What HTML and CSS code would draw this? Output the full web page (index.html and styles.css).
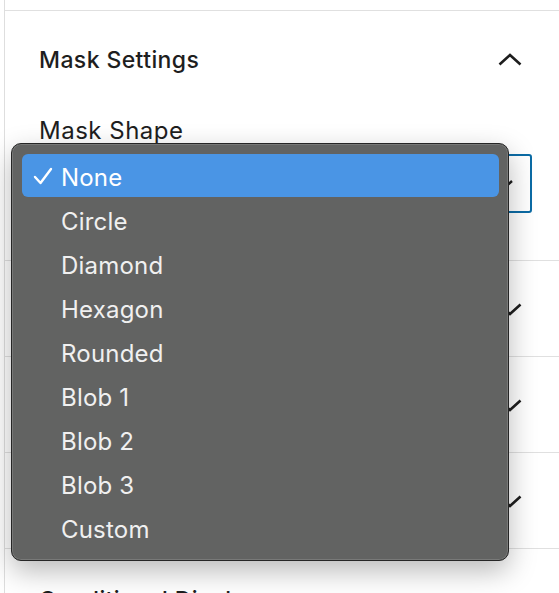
FILE: index.html
```html
<!DOCTYPE html>
<html>
<head>
<meta charset="utf-8">
<link rel="stylesheet" href="styles.css">
</head>
<body>
<div class="sidebar">
  <div class="prev"></div>
  <section class="panel open">
    <div class="panel-header">
      <span class="panel-title">Mask Settings</span>
      <svg class="chev" width="24" height="14" viewBox="0 0 24 14"><path d="M1.5 11.5 L12 2 L22.5 11.5" fill="none" stroke="#1e1e1e" stroke-width="2.6"/></svg>
    </div>
    <div class="panel-body">
      <div class="field-label">Mask Shape</div>
      <div class="select">
        <svg class="sel-chev" width="18" height="12" viewBox="0 0 18 12"><path d="M2 3 L9 9.5 L16 3" fill="none" stroke="#1e1e1e" stroke-width="2.4"/></svg>
      </div>
    </div>
  </section>
  <section class="panel closed">
    <div class="panel-header"><span class="panel-title"></span><svg class="chev" width="24" height="14" viewBox="0 0 24 14"><path d="M1.5 2.5 L12 12 L22.5 2.5" fill="none" stroke="#1e1e1e" stroke-width="2.6"/></svg></div>
  </section>
  <section class="panel closed">
    <div class="panel-header"><span class="panel-title"></span><svg class="chev" width="24" height="14" viewBox="0 0 24 14"><path d="M1.5 2.5 L12 12 L22.5 2.5" fill="none" stroke="#1e1e1e" stroke-width="2.6"/></svg></div>
  </section>
  <section class="panel closed">
    <div class="panel-header"><span class="panel-title"></span><svg class="chev" width="24" height="14" viewBox="0 0 24 14"><path d="M1.5 2.5 L12 12 L22.5 2.5" fill="none" stroke="#1e1e1e" stroke-width="2.6"/></svg></div>
  </section>
  <section class="panel last">
    <div class="panel-header"><span class="panel-title">Conditional Display</span></div>
  </section>
</div>

<ul class="menu">
  <li class="item selected"><svg class="check" width="20" height="18" viewBox="0 0 20 18"><path d="M2 10 L7.5 16 L18 2" fill="none" stroke="#ffffff" stroke-width="2.4" stroke-linecap="round" stroke-linejoin="round"/></svg>None</li>
  <li class="item">Circle</li>
  <li class="item">Diamond</li>
  <li class="item">Hexagon</li>
  <li class="item">Rounded</li>
  <li class="item">Blob 1</li>
  <li class="item">Blob 2</li>
  <li class="item">Blob 3</li>
  <li class="item">Custom</li>
</ul>
</body>
</html>
```
FILE: styles.css
```css
html, body {
  margin: 0;
  padding: 0;
  background: #ffffff;
  height: 593px;
  overflow: hidden;
}
body {
  font-family: Inter, "Noto Sans", "Liberation Sans", sans-serif;
  color: #1e1e1e;
  position: relative;
}
.sidebar {
  margin-left: 4px;
  border-left: 1px solid #dedede;
  min-height: 593px;
}
.prev {
  height: 10px;
}
.panel {
  border-top: 1px solid #e0e0e0;
}
.panel-header {
  display: flex;
  align-items: center;
  justify-content: space-between;
  padding: 0 37px 0 34px;
}
.panel-title {
  font-size: 23px;
  font-weight: 500;
  line-height: 28px;
  letter-spacing: 0.4px;
}
.open .panel-header {
  padding-top: 35px;
}
.closed .panel-header {
  height: 95px;
}
.last .panel-header {
  padding-top: 37px;
}
.panel-body {
  padding: 43px 27px 47px 34px;
}
.field-label {
  font-size: 24px;
  line-height: 28px;
  font-weight: 400;
  letter-spacing: 0.5px;
}
.select {
  margin-top: 9px;
  height: 55px;
  border: 2px solid #0b6ba5;
  border-radius: 3px;
  display: flex;
  align-items: center;
  justify-content: flex-end;
  padding-right: 16px;
}
.menu {
  position: absolute;
  left: 11px;
  top: 143px;
  width: 477px;
  margin: 0;
  padding: 10px 9px 10px 10px;
  list-style: none;
  background: #626362;
  border: 1px solid #262626;
  border-radius: 10px;
  box-shadow: inset 0 0 0 1px rgba(255, 255, 255, 0.14), 0 10px 28px rgba(0, 0, 0, 0.28);
}
.item {
  position: relative;
  height: 44px;
  line-height: 48px;
  padding-left: 39px;
  font-size: 24px;
  letter-spacing: 0.2px;
  color: #f0f0f0;
  border-radius: 6px;
}
.item.selected {
  height: 43px;
  line-height: 47px;
  margin-bottom: 1px;
  background: #4a95e5;
  color: #ffffff;
}
.check {
  position: absolute;
  left: 11px;
  top: 13px;
}
```
